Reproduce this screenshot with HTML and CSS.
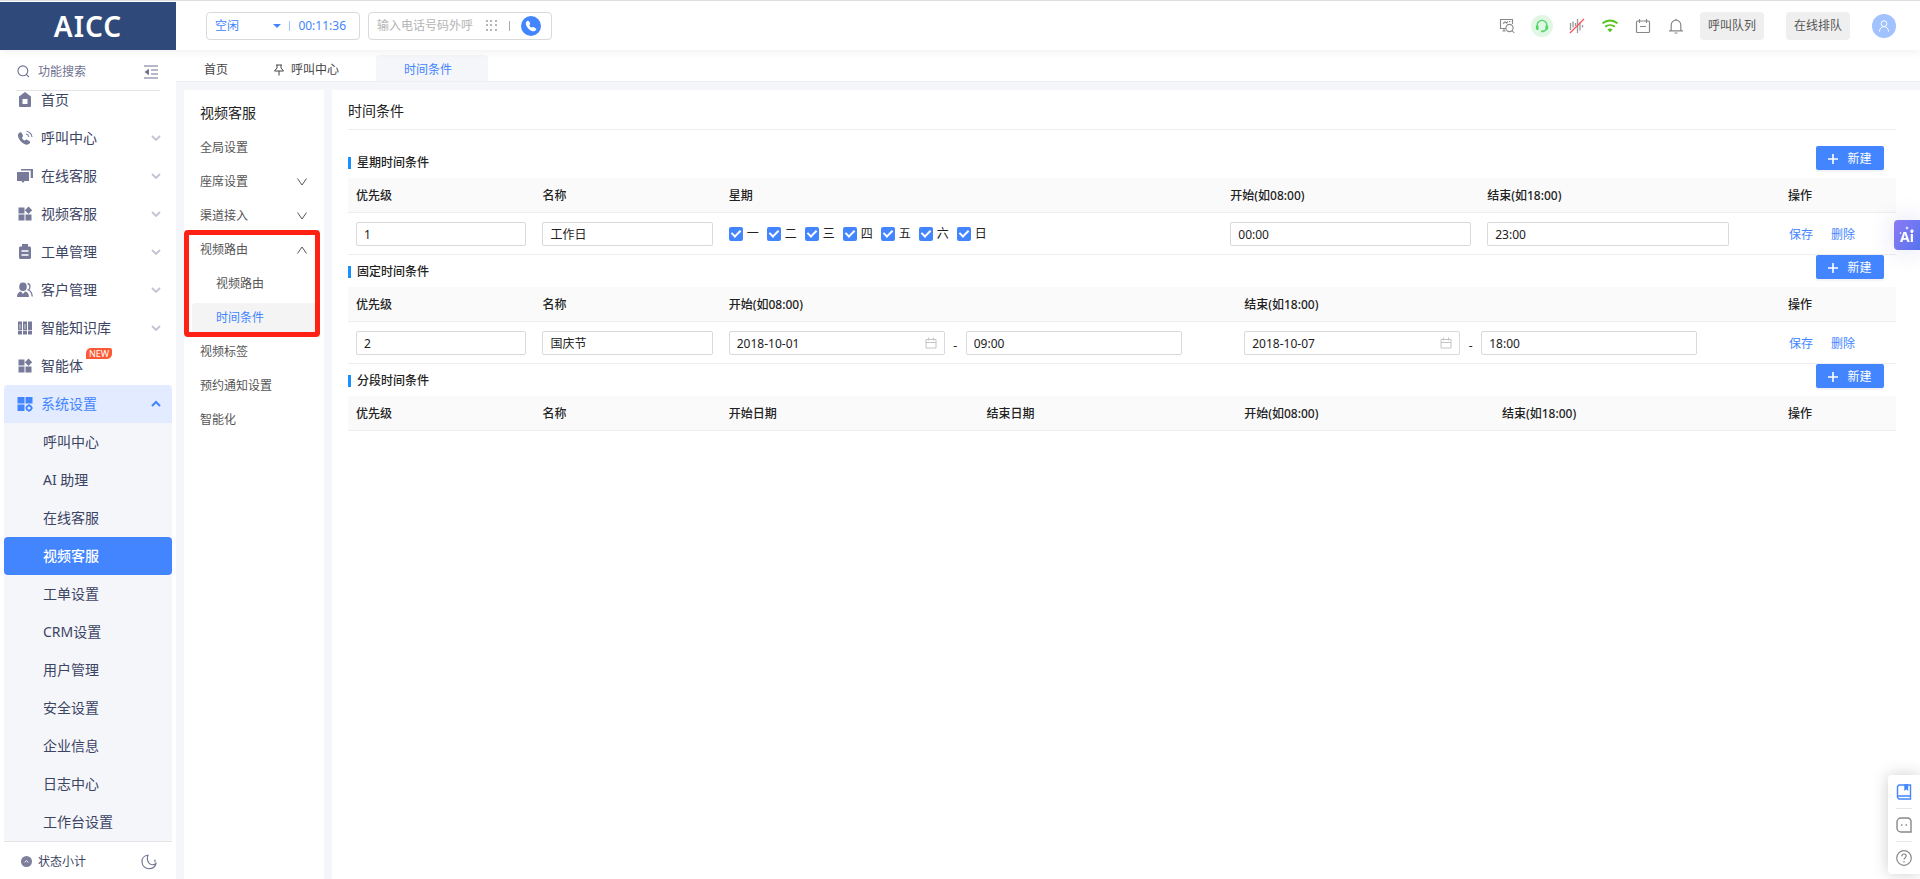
FILE: index.html
```html
<!DOCTYPE html>
<html lang="zh-CN">
<head>
  <meta charset="UTF-8">
  <meta name="viewport" content="width=device-width, initial-scale=1.0">
  <title>AICC - 时间条件</title>
  <link rel="stylesheet" href="styles.css">
</head>
<body>
  <svg class="sprite" aria-hidden="true">
    <symbol id="i-down" viewBox="0 0 10 10"><path d="M1 3l4 4 4-4" fill="none" stroke="currentColor" stroke-width="1.800"/></symbol>
    <symbol id="i-up" viewBox="0 0 10 10"><path d="M1 7l4-4 4 4" fill="none" stroke="currentColor" stroke-width="2"/></symbol>
    <symbol id="i-thin-down" viewBox="0 0 10 10"><path d="M.5 1.500L5 8l4.500-6.500" fill="none" stroke="currentColor"/></symbol>
    <symbol id="i-thin-up" viewBox="0 0 10 10"><path d="M.5 8.500L5 2l4.500 6.500" fill="none" stroke="currentColor"/></symbol>
    <symbol id="i-grid" viewBox="0 0 16 16"><path d="M1.500 1.500h6v6h-6zM1.500 8.500h6v6h-6zM8.500 8.500h6v6h-6zM11.500.500l3.700 3.700-3.700 3.700-3.700-3.700z" fill="currentColor"/></symbol>
    <symbol id="i-calendar" viewBox="0 0 12 12"><path d="M1 2.500h10v8.500H1zM1 5.500h10M3.500.500v3M8.500.500v3" fill="none" stroke="currentColor"/></symbol>
    <symbol id="i-plus" viewBox="0 0 10 10"><path d="M5 0v10M0 5h10" fill="none" stroke="currentColor" stroke-width="1.600"/></symbol>
    <symbol id="i-phone" viewBox="0 0 16 16"><path d="M2.500 1.500C3.600.600 4.900.700 5.600 1.900l1.100 2.300c.4.9.1 1.600-.5 2.200l-.6.600c.7 1.400 1.900 2.600 3.400 3.400l.7-.6c.7-.6 1.400-.7 2.200-.2l2.200 1.300c1.100.8 1.200 2 .2 2.900-1.600 1.600-3.600 1.700-6 .5C5.200 12.700 2.900 10 1.600 6.900.7 4.600 1 2.800 2.500 1.500z" fill="currentColor"/></symbol>
  </svg>

  <header class="topbar">
    <div class="logo">AICC</div>
    <div class="status-box">
      <div class="status-wrap">
        <select class="status-select" aria-label="坐席状态">
          <option>空闲</option>
        </select>
      </div>
      <span class="split"></span>
      <span class="timer">00:11:36</span>
    </div>
    <div class="dial-box">
      <input class="dial-input" type="text" placeholder="输入电话号码外呼" aria-label="输入电话号码外呼">
      <svg class="dots" viewBox="0 0 11 11"><path d="M0 0h2v2H0zM4 0h2v2H4zM9 0h2v2H9zM0 4h2v2H0zM4 4h2v2H4zM9 4h2v2H9zM0 9h2v2H0zM4 9h2v2H4zM9 9h2v2H9z" fill="#b5b5b5"/></svg>
      <span class="split gray"></span>
      <button class="call-btn" type="button" aria-label="呼叫"><svg width="12" height="12"><use href="#i-phone"/></svg></button>
    </div>
    <div class="tools">
      <button class="tool" type="button" aria-label="质检">
        <svg viewBox="0 0 16 16" width="16" height="16" fill="none" stroke="currentColor" stroke-width="1.100"><path d="M6.500 13H3.500M5 13v-2.500M7 10.500H1.500v-9h12V6M4 5.500l2-1.500 1.500 1L9 3.500M10 3.500h1.500"/><circle cx="10.500" cy="10" r="3.600"/><path d="M13 12.500l2.300 2.500"/></svg>
      </button>
      <button class="tool headset" type="button" aria-label="在线">
        <svg viewBox="0 0 16 16" width="14" height="14"><path d="M2.500 8.500V7a5.500 5.500 0 0 1 11 0v1.500M13.300 11c-.4 2-2 3-4.800 3.200" fill="none" stroke="#4fd466" stroke-width="1.500"/><path d="M1 7.500h3v5H3a2 2 0 0 1-2-2zM12 7.500h3v3a2 2 0 0 1-2 2h-1zM7 13.200h2.500v2H7z" fill="#4fd466"/></svg>
      </button>
      <button class="tool" type="button" aria-label="静音">
        <svg viewBox="0 0 16 16" width="16" height="16" fill="none"><path d="M1.500 5v7M4 3.500v6M6.500 5v3M8.500 1v14M11 4.500v8M13.500 7v2.500" stroke="#999" stroke-width="1.300"/><path d="M1 15L15 1" stroke="#fa4e58" stroke-width="1.200"/></svg>
      </button>
      <button class="tool" type="button" aria-label="网络">
        <svg viewBox="0 0 16 16" width="16" height="16" fill="none" stroke="#52c41a"><path d="M.5 5.300C5 1.500 11 1.500 15.500 5.300M3.200 8.800c2.800-2.300 6.800-2.300 9.600 0" stroke-width="1.900"/><path d="M5.500 11.500c1.500-1.300 3.500-1.300 5 0L8 14.200z" fill="#52c41a" stroke="none"/></svg>
      </button>
      <button class="tool" type="button" aria-label="日程">
        <svg viewBox="0 0 16 16" width="16" height="16" fill="none" stroke="currentColor" stroke-width="1.200"><rect x="1.500" y="3" width="13" height="11.500" rx="1"/><path d="M4.500 1v4M11.500 1v4M5 8.500h6"/></svg>
      </button>
      <button class="tool" type="button" aria-label="通知">
        <svg viewBox="0 0 16 16" width="16" height="16" fill="none" stroke="currentColor" stroke-width="1.200"><path d="M3.200 12.500V7a4.800 4.800 0 0 1 9.600 0v5.500M1 12.800h14M8 .8V2M6.500 15h3"/></svg>
      </button>
      <div class="queue">
        <button class="queue-btn" type="button">呼叫队列</button>
        <button class="queue-btn" type="button">在线排队</button>
        <button class="avatar" type="button" aria-label="个人中心">
          <svg viewBox="0 0 12 12" width="12" height="12" fill="none" stroke="#fff"><circle cx="6" cy="3.700" r="2.900"/><path d="M1.500 11.500c0-6.500 9-6.500 9 0"/></svg>
        </button>
      </div>
    </div>
  </header>

  <div class="body">
    <aside class="sidebar">
      <div class="search-row">
        <svg viewBox="0 0 14 14" width="13" height="13" fill="none" stroke="currentColor" stroke-width="1.200"><circle cx="6.300" cy="6.300" r="5.300"/><path d="M10 10l3 3"/></svg>
        <input class="search-input" type="text" placeholder="功能搜索" aria-label="功能搜索">
        <button class="fold" type="button" aria-label="收起菜单"><svg viewBox="0 0 14 14" width="14" height="14"><path d="M0 1h14M7 5h7M7 9h7M0 13h14" stroke="currentColor" stroke-width="1.200"/><path d="M5 3.800v6.400L.5 7z" fill="currentColor"/></svg></button>
      </div>
      <nav class="menu">
        <a class="menu-item" href="#"><svg viewBox="0 0 16 16" class="mi"><path fill-rule="evenodd" d="M8 0l6 4.500V14a1 1 0 0 1-1 1H3a1 1 0 0 1-1-1V4.500zM5.500 7v5h5V7z" fill="currentColor"/></svg>首页</a>
        <a class="menu-item" href="#"><svg viewBox="0 0 16 16" class="mi"><use href="#i-phone" y="1" width="14" height="15"/><path d="M9 4c1.500.3 2.500 1.300 2.800 2.800M9.500 1.200C12.500 1.700 14.500 3.800 15 7" fill="none" stroke="currentColor" stroke-width="1.100"/></svg>呼叫中心<svg class="arrow"><use href="#i-down"/></svg></a>
        <a class="menu-item" href="#"><svg viewBox="0 0 16 16" class="mi"><path d="M0 4h12v9H7.500L6 15l-1.500-2H0zM4 1h12v9h-2.300V2.500H4z" fill="currentColor"/></svg>在线客服<svg class="arrow"><use href="#i-down"/></svg></a>
        <a class="menu-item" href="#"><svg class="mi"><use href="#i-grid"/></svg>视频客服<svg class="arrow"><use href="#i-down"/></svg></a>
        <a class="menu-item" href="#"><svg viewBox="0 0 16 16" class="mi"><path d="M5 0h6v2.500h2l1 1V14l-1 1H3l-1-1V3.500l1-1h2z" fill="currentColor"/><path d="M4.500 7h7M4.500 11h7" stroke="#fff" stroke-width="1.500"/></svg>工单管理<svg class="arrow"><use href="#i-down"/></svg></a>
        <a class="menu-item" href="#"><svg viewBox="0 0 16 16" class="mi"><ellipse cx="6" cy="4.800" rx="3.800" ry="4.300" fill="currentColor"/><path d="M0 15c0-3.500 1.500-5 4-5.500L6 12l2-2.500c2.500.5 4 2 4 5.500z" fill="currentColor"/><path d="M10.500 1.500c3 .5 3.300 5 .8 6.500 2.500 1 3.700 3 3.900 6.500" fill="none" stroke="currentColor" stroke-width="1.300"/></svg>客户管理<svg class="arrow"><use href="#i-down"/></svg></a>
        <a class="menu-item" href="#"><svg viewBox="0 0 16 16" class="mi"><path d="M1 1.500h4v13H1zM6 1.500h4v13H6zM11 1.500h4v13h-4z" fill="currentColor"/><path d="M3 4v5M8 4v5" stroke="#fff" stroke-width=".7"/><path d="M1 10.500h14" stroke="#fff" stroke-width=".7"/></svg>智能知识库<svg class="arrow"><use href="#i-down"/></svg></a>
        <a class="menu-item" href="#"><svg class="mi"><use href="#i-grid"/></svg><span class="with-badge">智能体<span class="badge">NEW</span></span></a>
        <a class="menu-item open" href="#"><svg viewBox="0 0 16 16" class="mi"><path d="M.5 1h7v6.500h-7zM8.500 1h7v6.500h-7zM.5 8.500h7V15h-7z" fill="currentColor"/><circle cx="12" cy="12" r="2.400" fill="none" stroke="currentColor" stroke-width="1.600"/><path d="M12 8.300v1.500M12 14.200v1.500M8.500 12h1M14.500 12h1.200" stroke="currentColor" stroke-width="1.500"/></svg>系统设置<svg class="arrow"><use href="#i-up"/></svg></a>
        <div class="submenu">
          <a class="sub-item" href="#">呼叫中心</a>
          <a class="sub-item" href="#">AI 助理</a>
          <a class="sub-item" href="#">在线客服</a>
          <a class="sub-item current" href="#">视频客服</a>
          <a class="sub-item" href="#">工单设置</a>
          <a class="sub-item" href="#">CRM设置</a>
          <a class="sub-item" href="#">用户管理</a>
          <a class="sub-item" href="#">安全设置</a>
          <a class="sub-item" href="#">企业信息</a>
          <a class="sub-item" href="#">日志中心</a>
          <a class="sub-item" href="#">工作台设置</a>
        </div>
      </nav>
      <div class="side-foot">
        <svg viewBox="0 0 12 12" width="11" height="11"><circle cx="6" cy="6" r="6" fill="#7d7f9c"/><path d="M4 7l2-2 2 2" fill="none" stroke="#fff"/></svg>
        <span>状态小计</span>
        <button class="theme-btn" type="button" aria-label="切换主题"><svg viewBox="0 0 16 16" width="16" height="16"><path d="M7 1.200C2.500 1.500.8 5 1 8.200c.3 3.800 3.300 6.600 7 6.600 3.500 0 6.200-2 7-5.300-2 1.500-5 1.500-6.800-.2C6.200 7.300 5.800 3.500 7 1.200zM14 5.500v3" fill="none" stroke="currentColor" stroke-width="1.100"/></svg></button>
      </div>
    </aside>

    <div class="work">
      <nav class="tabs">
        <a class="tab home" href="#">首页</a>
        <a class="tab pinned" href="#"><svg viewBox="0 0 12 12" width="12" height="12" fill="none" stroke="currentColor"><path d="M3 1h6M4 1v3L1.500 7h9L8 4V1M6 7v4.500"/></svg>呼叫中心</a>
        <a class="tab active" href="#">时间条件</a>
      </nav>
      <div class="panels">
        <nav class="subnav">
          <h2 class="subnav-title">视频客服</h2>
          <a class="nav-item" href="#">全局设置</a>
          <a class="nav-item" href="#">座席设置<svg class="chev"><use href="#i-thin-down"/></svg></a>
          <a class="nav-item" href="#">渠道接入<svg class="chev"><use href="#i-thin-down"/></svg></a>
          <div class="nav-group">
            <a class="nav-item" href="#">视频路由<svg class="chev"><use href="#i-thin-up"/></svg></a>
            <a class="nav-item child" href="#">视频路由</a>
            <a class="nav-item child on" href="#">时间条件</a>
          </div>
          <a class="nav-item" href="#">视频标签</a>
          <a class="nav-item" href="#">预约通知设置</a>
          <a class="nav-item" href="#">智能化</a>
        </nav>

        <main class="content">
          <h1 class="page-title">时间条件</h1>

          <section>
            <div class="section-head">
              <h3>星期时间条件</h3>
              <button class="add-btn" type="button"><svg width="10" height="10"><use href="#i-plus"/></svg>新建</button>
            </div>
            <table class="grid">
              <colgroup><col class="c-12"><col class="c-12"><col class="c-week"><col class="c-start"><col><col class="c-op"></colgroup>
              <thead>
                <tr><th>优先级</th><th>名称</th><th>星期</th><th>开始(如08:00)</th><th>结束(如18:00)</th><th>操作</th></tr>
              </thead>
              <tbody>
                <tr>
                  <td><input class="field" type="text" value="1" aria-label="优先级"></td>
                  <td><input class="field" type="text" value="工作日" aria-label="名称"></td>
                  <td>
                    <div class="days">
                      <label><input type="checkbox" checked>一</label>
                      <label><input type="checkbox" checked>二</label>
                      <label><input type="checkbox" checked>三</label>
                      <label><input type="checkbox" checked>四</label>
                      <label><input type="checkbox" checked>五</label>
                      <label><input type="checkbox" checked>六</label>
                      <label><input type="checkbox" checked>日</label>
                    </div>
                  </td>
                  <td><input class="field" type="text" value="00:00" aria-label="开始"></td>
                  <td><input class="field end" type="text" value="23:00" aria-label="结束"></td>
                  <td><div class="ops"><a href="#">保存</a><a href="#">删除</a></div></td>
                </tr>
              </tbody>
            </table>
          </section>

          <section>
            <div class="section-head">
              <h3>固定时间条件</h3>
              <button class="add-btn" type="button"><svg width="10" height="10"><use href="#i-plus"/></svg>新建</button>
            </div>
            <table class="grid">
              <colgroup><col class="c-12"><col class="c-12"><col class="c-third"><col><col class="c-op"></colgroup>
              <thead>
                <tr><th>优先级</th><th>名称</th><th>开始(如08:00)</th><th>结束(如18:00)</th><th>操作</th></tr>
              </thead>
              <tbody>
                <tr>
                  <td><input class="field" type="text" value="2" aria-label="优先级"></td>
                  <td><input class="field" type="text" value="国庆节" aria-label="名称"></td>
                  <td>
                    <div class="range">
                      <div class="date"><input class="field" type="text" value="2018-10-01" aria-label="开始日期"><svg class="cal"><use href="#i-calendar"/></svg></div>
                      <span class="dash">-</span>
                      <input class="field time" type="text" value="09:00" aria-label="开始时间">
                    </div>
                  </td>
                  <td>
                    <div class="range">
                      <div class="date"><input class="field" type="text" value="2018-10-07" aria-label="结束日期"><svg class="cal"><use href="#i-calendar"/></svg></div>
                      <span class="dash">-</span>
                      <input class="field time" type="text" value="18:00" aria-label="结束时间">
                    </div>
                  </td>
                  <td><div class="ops"><a href="#">保存</a><a href="#">删除</a></div></td>
                </tr>
              </tbody>
            </table>
          </section>

          <section>
            <div class="section-head">
              <h3>分段时间条件</h3>
              <button class="add-btn" type="button"><svg width="10" height="10"><use href="#i-plus"/></svg>新建</button>
            </div>
            <table class="grid">
              <colgroup><col class="c-12"><col class="c-12"><col class="c-sixth"><col class="c-sixth"><col class="c-sixth"><col><col class="c-op"></colgroup>
              <thead>
                <tr><th>优先级</th><th>名称</th><th>开始日期</th><th>结束日期</th><th>开始(如08:00)</th><th>结束(如18:00)</th><th>操作</th></tr>
              </thead>
            </table>
          </section>
        </main>
      </div>
    </div>
  </div>

  <button class="ai-tab" type="button">
    <span>Ai</span>
    <svg class="sparkle" viewBox="0 0 18 14" width="18" height="14"><path d="M8 0l.6 1.400L10 2l-1.400.6L8 4l-.6-1.400L6 2l1.400-.6zM13 2.500l.8 1.700 1.700.8-1.700.8-.8 1.700-.8-1.700-1.700-.8 1.700-.8zM1.500 6l1 1-1 1-1-1z" fill="#fff"/></svg>
  </button>
  <div class="float-bar">
    <button type="button" class="blue" aria-label="文档"><svg viewBox="0 0 16 16" width="16" height="16" fill="none" stroke="currentColor" stroke-width="1.400"><path d="M3 1h11.500v14H3L1.500 13.500v-11zM2 12h12"/><path d="M9 1h2.500v4.500L10.200 4.500 9 5.500z" fill="currentColor"/></svg></button>
    <button type="button" aria-label="消息"><svg viewBox="0 0 16 16" width="16" height="16" fill="none" stroke="currentColor" stroke-width="1.400"><path d="M5 1h6.500A3.500 3.500 0 0 1 15 4.500V15H5a4 4 0 0 1-4-4V5a4 4 0 0 1 4-4z"/><path d="M5 8h1.500M9.500 8H11"/></svg></button>
    <button type="button" aria-label="帮助"><svg viewBox="0 0 16 16" width="16" height="16" fill="none" stroke="currentColor" stroke-width="1.200"><circle cx="8" cy="8" r="7.300"/><path d="M5.800 6.300c0-3 4.400-3 4.400-.3 0 1.700-2.200 1.700-2.200 3.600M8 11v1.400"/></svg></button>
  </div>
</body>
</html>
```

FILE: styles.css
```css
* {
  box-sizing: border-box;
}
body {
  margin: 0;
  height: 100vh;
  display: flex;
  flex-direction: column;
  overflow: hidden;
  font-family: "Noto Sans", "Noto Sans CJK SC", sans-serif;
  font-size: 12px;
  line-height: 18px;
  color: #222;
  background: #f4f6fa;
}
a {
  color: inherit;
  text-decoration: none;
}
button, input, select {
  font: inherit;
  color: inherit;
}
button {
  padding: 0;
  border: 0;
  background: none;
  cursor: pointer;
}
svg {
  display: block;
  flex: none;
}
h1, h2, h3 {
  margin: 0;
}
.sprite {
  display: none;
}

/* top bar */
.topbar {
  display: flex;
  align-items: center;
  height: 50px;
  border-top: 1px solid #ddd;
  background: #fff;
  box-shadow: 0 2px 8px rgba(0, 0, 0, 0.06);
  position: relative;
  z-index: 2;
}
.logo {
  width: 176px;
  height: 48px;
  margin-top: 1px;
  line-height: 48px;
  text-align: center;
  font-size: 28px;
  font-weight: 600;
  letter-spacing: 1px;
  color: #fff;
  background: #2f4a7a;
}
.status-box, .dial-box {
  display: flex;
  align-items: center;
  height: 28px;
  border: 1px solid #d9d9d9;
  border-radius: 4px;
}
.status-box {
  width: 154px;
  margin-left: 30px;
  padding: 0 13px 0 8px;
  justify-content: space-between;
  color: #4285ff;
}
.status-wrap {
  display: flex;
  align-items: center;
  width: 66px;
}
.status-wrap::after {
  content: "";
  border: 4px solid transparent;
  border-top-color: #4285ff;
  border-bottom: 0;
}
.status-select {
  flex: 1;
  min-width: 0;
  padding: 0;
  border: 0;
  outline: 0;
  appearance: none;
  background: none;
}
.split {
  width: 1px;
  height: 10px;
  background: #a0c2ff;
}
.split.gray {
  background: #aaa;
}
.dial-box {
  width: 184px;
  margin-left: 8px;
  padding: 0 10px 0 8px;
}
.dial-input {
  flex: 1;
  min-width: 0;
  padding: 0;
  border: 0;
  outline: 0;
}
.dial-input::placeholder {
  color: #b5b5b5;
}
.dots {
  width: 11px;
  height: 11px;
  margin-right: 12px;
}
.call-btn {
  display: grid;
  place-items: center;
  width: 20px;
  height: 20px;
  margin-left: 11px;
  border-radius: 50%;
  color: #fff;
  background: #4285ff;
}
.tools {
  display: flex;
  align-items: center;
  gap: 15px;
  margin-left: auto;
  padding-right: 24px;
}
.tool {
  display: grid;
  place-items: center;
  width: 18px;
  height: 22px;
  color: #888;
}
.tool.headset {
  width: 22px;
  border-radius: 50%;
  background: #e0f7e4;
}
.queue {
  display: flex;
  align-items: center;
  gap: 22px;
}
.queue-btn {
  height: 28px;
  padding: 1px 8px 0;
  border-radius: 4px;
  color: #555;
  background: #efefef;
}
.avatar {
  display: grid;
  place-items: center;
  width: 24px;
  height: 24px;
  border-radius: 50%;
  background: #a0c2ff;
}

.body {
  flex: 1;
  min-height: 0;
  display: flex;
}

/* left menu */
.sidebar {
  width: 176px;
  flex: none;
  display: flex;
  flex-direction: column;
  background: #fff;
}
.search-row {
  display: flex;
  align-items: center;
  gap: 8px;
  height: 41px;
  margin: 0 16px;
  padding: 3px 2px 0 1px;
  border-bottom: 1px solid #e4e4e8;
  color: #6f7191;
}
.search-input {
  flex: 1;
  min-width: 0;
  padding: 0;
  border: 0;
  outline: 0;
  background: none;
}
.search-input::placeholder {
  color: #6f7191;
}
.fold, .theme-btn {
  color: #6f7191;
}
.menu {
  flex: 1;
  min-height: 0;
  display: flex;
  flex-direction: column;
  justify-content: flex-end;
  overflow: hidden;
  margin: 0 4px;
  font-size: 14px;
  color: #3c4464;
}
.menu-item {
  display: flex;
  align-items: center;
  flex: none;
  height: 38px;
  padding: 0 11px 0 13px;
}
.menu-item.open {
  border-radius: 4px 4px 0 0;
  color: #4285ff;
  background: #e2ebff;
}
.mi {
  width: 16px;
  height: 16px;
  margin-right: 8px;
  color: #777a99;
}
.open .mi {
  color: #4285ff;
}
.arrow {
  width: 10px;
  height: 10px;
  margin-left: auto;
  color: #c3c4d2;
}
.open .arrow {
  color: #4285ff;
}
.with-badge {
  position: relative;
}
.badge {
  position: absolute;
  left: 45px;
  top: -9px;
  padding: 0 3px;
  border-radius: 5px 2px 5px 0;
  font-size: 9px;
  line-height: 11px;
  color: #fff;
  background: #fb5a35;
}
.submenu {
  flex: none;
  border-radius: 0 0 4px 4px;
  background: #f4f6fa;
}
.sub-item {
  display: block;
  height: 38px;
  padding-left: 39px;
  line-height: 38px;
}
.sub-item.current {
  border-radius: 4px;
  font-weight: 500;
  color: #fff;
  background: #4285ff;
}
.side-foot {
  display: flex;
  align-items: center;
  gap: 6px;
  height: 38px;
  margin: 0 4px;
  padding: 2px 15px 0 17px;
  border-top: 1px solid #e4e4e8;
  color: #3c4464;
}
.theme-btn {
  margin-left: auto;
}

/* tabs */
.work {
  flex: 1;
  min-width: 0;
  display: flex;
  flex-direction: column;
}
.tabs {
  display: flex;
  align-items: flex-end;
  height: 32px;
  border-bottom: 1px solid #eceef2;
  background: #fff;
}
.tab {
  display: flex;
  align-items: center;
  height: 26px;
  padding-top: 3px;
  color: #444;
}
.tab.home {
  padding-left: 28px;
  padding-right: 28px;
}
.tab.pinned {
  gap: 6px;
  padding-left: 17px;
  padding-right: 37px;
}
.tab.active {
  padding-left: 28px;
  padding-right: 36px;
  border-radius: 4px 4px 0 0;
  color: #4285ff;
  background: #f4f6fa;
}
.panels {
  flex: 1;
  min-height: 0;
  display: flex;
  gap: 8px;
  padding: 8px 0 0 8px;
}

/* second level nav */
.subnav {
  width: 140px;
  flex: none;
  padding-top: 7px;
  color: #555;
  background: #fff;
}
.subnav-title {
  padding: 0 16px;
  font-size: 14px;
  font-weight: 400;
  line-height: 32px;
  color: #222;
}
.nav-item {
  display: flex;
  align-items: center;
  justify-content: space-between;
  height: 30px;
  margin: 4px 8px 0;
  padding: 0 9px 0 8px;
  border-radius: 4px;
}
.nav-group {
  position: relative;
}
.nav-group::after {
  content: "";
  position: absolute;
  inset: -5px 4px -4px 0;
  border: 5px solid #ff2113;
  border-radius: 4px;
  pointer-events: none;
}
.nav-item.child {
  padding-left: 24px;
}
.nav-item.on {
  color: #4285ff;
  background: #f4f4f4;
}
.chev {
  width: 10px;
  height: 10px;
}

/* content */
.content {
  flex: 1;
  min-width: 0;
  padding: 0 24px 0 16px;
  background: #fff;
}
.page-title {
  height: 40px;
  margin-bottom: 16px;
  padding-top: 1px;
  border-bottom: 1px solid #eee;
  font-size: 14px;
  font-weight: 400;
  line-height: 40px;
}
.section-head {
  display: flex;
  justify-content: space-between;
  height: 32px;
  padding-right: 12px;
}
.section-head h3 {
  display: flex;
  align-items: center;
  gap: 6px;
  padding-top: 2px;
  font-size: 12px;
  font-weight: 500;
}
.section-head h3::before {
  content: "";
  width: 3px;
  height: 12px;
  background: #1890ff;
}
.add-btn {
  display: flex;
  align-items: center;
  justify-content: center;
  gap: 9px;
  width: 68px;
  height: 24px;
  padding-top: 2px;
  border-radius: 2px;
  color: #fff;
  background: #4285ff;
  box-shadow: 0 2px 1px rgba(0, 0, 0, 0.05);
}
.grid {
  width: 100%;
  border-collapse: separate;
  border-spacing: 0;
  table-layout: fixed;
}
.grid th, .grid td {
  padding: 0 8px;
  border-bottom: 1px solid #eee;
  text-align: left;
}
.grid th {
  height: 35px;
  padding-top: 2px;
  font-weight: 500;
  background: #fafafa;
}
.grid td {
  height: 42px;
}
.c-12 { width: 12.04%; }
.c-week { width: 32.4%; }
.c-start { width: 16.6%; }
.c-third { width: 33.3%; }
.c-sixth { width: 16.65%; }
.c-op { width: 7.5%; }
.field {
  display: block;
  width: 100%;
  height: 24px;
  padding: 1px 7px 0;
  border: 1px solid #d9d9d9;
  border-radius: 2px;
  outline: 0;
  background: #fff;
}
.field.end {
  width: 85%;
}
.days {
  display: flex;
  gap: 8px;
}
.days label {
  display: flex;
  align-items: center;
  gap: 4px;
}
.days input {
  width: 14px;
  height: 14px;
  margin: 0;
  appearance: none;
  border-radius: 2px;
  background: #4285ff;
  display: grid;
  place-items: center;
}
.days input::after {
  content: "";
  width: 4px;
  height: 7px;
  margin-bottom: 2px;
  border: solid #fff;
  border-width: 0 2px 2px 0;
  box-sizing: content-box;
  transform: rotate(45deg);
}
.days input:not(:checked) {
  border: 1px solid #d9d9d9;
  background: #fff;
}
.range {
  display: flex;
  align-items: center;
}
.date {
  position: relative;
}
.date, .time {
  width: 216px;
}
.cal {
  position: absolute;
  right: 8px;
  top: 6px;
  width: 12px;
  height: 12px;
  color: #c4c4c4;
}
.dash {
  width: 21px;
  padding-top: 6px;
  text-align: center;
}
.ops {
  display: flex;
  gap: 18px;
  padding: 2px 0 0 1px;
  color: #4285ff;
}

/* floating widgets */
.ai-tab {
  position: fixed;
  right: 0;
  top: 220px;
  width: 26px;
  height: 30px;
  z-index: 3;
  padding-top: 3px;
  border-radius: 4px 0 0 4px;
  font-size: 14px;
  font-weight: 700;
  color: #fff;
  background: linear-gradient(120deg, #8d7bf5, #5673ee);
  box-shadow: 0 0 24px rgba(90, 90, 200, 0.2);
}
.sparkle {
  position: absolute;
  left: 5px;
  top: 6px;
}
.float-bar {
  position: fixed;
  right: 0;
  bottom: 5px;
  width: 32px;
  padding: 0 8px;
  border-radius: 4px 0 0 4px;
  color: #888;
  background: #fff;
  box-shadow: 0 0 16px rgba(0, 0, 0, 0.2);
}
.float-bar button {
  display: grid;
  place-items: center;
  width: 16px;
  height: 33px;
}
.float-bar button + button {
  border-top: 1px solid #e6e6e6;
}
.float-bar .blue {
  color: #4285ff;
}
```
